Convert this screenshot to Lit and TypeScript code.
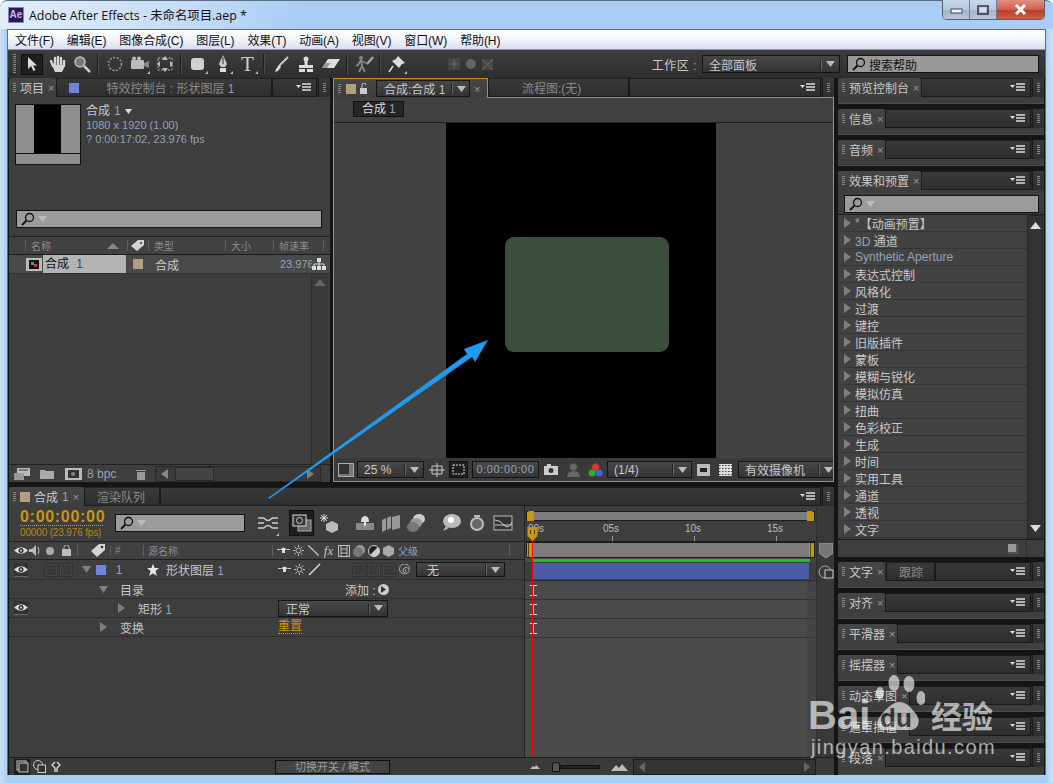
import { LitElement, html, css, svg } from "lit";
import { customElement } from "lit/decorators.js";

const ic = (w: number, h: number, body: unknown) =>
  html`<svg class="ic" width="${w}" height="${h}" viewBox="0 0 ${w} ${h}">${body}</svg>`;

const menuIc = ic(16, 9, svg`<path d="M0 2h5L2.500 5z" fill="#ddd"/><path d="M6 1h9M6 4h9M6 7h9" stroke="#ddd" stroke-width="1.300"/>`);
const triD = ic(9, 6, svg`<path d="M0 0h9L4.500 6z" fill="#bbb"/>`);
const triR = (c = "#7f7f7f") => ic(7, 10, svg`<path d="M0 0l7 5-7 5z" fill="${c}"/>`);
const triDown = ic(9, 7, svg`<path d="M0 0h9L4.500 7z" fill="#808080"/>`);
const glass = ic(14, 14, svg`<circle cx="8.500" cy="5.500" r="4" fill="none" stroke="#111" stroke-width="1.300"/><path d="M5.500 8.500L1 13" stroke="#111" stroke-width="1.800"/>`);
const eye = ic(14, 9, svg`<path d="M0 4.500Q7-2 14 4.500 7 11 0 4.500z" fill="#ddd"/><circle cx="7" cy="4.500" r="2.500" fill="#333"/><circle cx="7" cy="4.500" r="1" fill="#ddd"/>`);
const sun = ic(11, 11, svg`<circle cx="5.500" cy="5.500" r="2.500" fill="none" stroke="#bbb"/><path d="M5.500 0v2M5.500 9v2M0 5.500h2M9 5.500h2M1.500 1.500l1.500 1.500M8 8l1.500 1.500M9.500 1.500L8 3M3 8L1.500 9.500" stroke="#bbb"/>`);
const shy = ic(13, 7, svg`<path d="M0 2.500h3M10 2.500h3" stroke="#ccc"/><path d="M3 3Q6.500-2 10 3L8 3V6H5V3z" fill="#ddd"/>`);
const star = ic(12, 12, svg`<path d="M6 0l1.700 4H12L8.500 7l1.300 5L6 9.300 2.200 12l1.300-5L0 4h4.300z" fill="#e8e8e8"/>`);
const beam = ic(7, 11, svg`<path d="M0 .5h7M0 10.500h7M3.500 .5v10" stroke="#ddd"/>`);
const tag = ic(16, 15, svg`<path d="M1 8L9 1h6v6l-8 7z" fill="#d4d4d4"/><circle cx="12" cy="4" r="1.300" fill="#333"/>`);

const sel = (t: string, cls = "") => html`<div class="sel ${cls}"><span class="selt">${t}</span><b class="seld"></b>${triD}</div>`;
const grip = html`<div class="grip"><span class="dots"></span></div>`;

const menus = ["文件(F)", "编辑(E)", "图像合成(C)", "图层(L)", "效果(T)", "动画(A)", "视图(V)", "窗口(W)", "帮助(H)"];
const effects = ["【动画预置】", "3D 通道", "Synthetic Aperture", "表达式控制", "风格化", "过渡", "键控", "旧版插件", "蒙板", "模糊与锐化", "模拟仿真", "扭曲", "色彩校正", "生成", "时间", "实用工具", "通道", "透视", "文字"];

const tool = (body: unknown, more = true) => html`<div class="tool">${ic(22, 20, body)}${more ? html`<i class="more"></i>` : ""}</div>`;

@customElement("app-root")
export class AppRoot extends LitElement {
  static styles = css`
    :host { display: block; width: 1053px; height: 783px; overflow: hidden; font: 12px "Liberation Sans", "Noto Sans CJK SC", sans-serif; color: #c8c8c8; }
    * { box-sizing: border-box; }
    i { display: block; font-style: normal; }
    .ic { display: block; flex: none; }
    .win { position: relative; width: 1053px; height: 783px; overflow: hidden; border-radius: 7px 7px 0 0; background: linear-gradient(90deg, #c9dff6 0, #a9cdf4 8px, #a9cdf4 1045px, #cfe3f8 1053px); }
    .title { height: 29px; display: flex; align-items: flex-start; padding: 6px 8px 0 8px; border-top: 1px solid #5d6e80; background: linear-gradient(100deg, #e3eefa 0, #c7def6 170px, #a9cdf4 300px); border-radius: 7px 7px 0 0; }
    .aelogo { width: 16px; height: 16px; background: #2c1a55; border: 1px solid #8f83b5; color: #c8b4f4; font: bold 10px/14px "Liberation Sans", sans-serif; text-align: center; margin-right: 5px; }
    .ttext { font: 12.400px "Open Sans", "Noto Sans CJK SC", sans-serif; color: #111; line-height: 17px; }
    .wbtns { margin-left: auto; margin-top: -7px; display: flex; height: 20px; border: 1px solid #54606e; border-top: 0; border-radius: 0 0 5px 5px; overflow: hidden; }
    .wb { display: flex; align-items: center; justify-content: center; width: 27px; background: linear-gradient(#c5d8ec, #b6c9de 50%, #9fb4cb 51%, #b5c8dc); border-right: 1px solid #6e7e90; }
    .wb.close { width: 47px; border: 0; background: linear-gradient(#df8e7e, #d0604e 50%, #b93a28 51%, #c9604a); }
    .client { height: 746px; margin-left: 7px; width: 1039px; border: 1px solid #5f6d7d; border-bottom: 0; background: #151515; }
    .menu { height: 20px; display: flex; gap: 13px; align-items: center; padding-left: 7px; background: linear-gradient(#fff, #f5f7fc 40%, #d9dff0); border-bottom: 1px solid #8f99a8; color: #111; font-size: 12px; letter-spacing: -.1px; }
    .tools { height: 28px; display: flex; align-items: center; padding-left: 5px; background: linear-gradient(#3d3d3d, #2e2e2e); color: #ccc; }
    .tgrip { width: 3px; height: 20px; margin-right: 5px; background: repeating-linear-gradient(#888 0 1px, transparent 1px 2px); }
    .tool { position: relative; width: 25px; height: 20px; display: flex; align-items: center; justify-content: center; }
    .tool.on { width: 22px; margin-right: 1px; background: #1f1f1f; border: 1px solid #111; height: 21px; }
    .more { position: absolute; right: 2px; bottom: 0; border-left: 3px solid transparent; border-bottom: 3px solid #bbb; }
    .tsep { width: 1px; height: 20px; margin: 0 3px; background: #1d1d1d; border-right: 1px solid #4c4c4c; box-sizing: content-box; }
    .ttxt { font: 21px/20px "Liberation Serif", serif; color: #ccc; }
    .dim { opacity: .35; margin-left: 37px; display: flex; gap: 2px; }
    .dim .tool { width: 15px; }
    .ws { margin-left: auto; display: flex; align-items: center; }
    .wslabel { margin-right: 5px; font-size: 12px; color: #c8c8c8; letter-spacing: .5px; }
    .sel { display: flex; align-items: center; height: 16px; background: linear-gradient(#474747, #353535); border: 1px solid #141414; padding: 0 4px 0 6px; color: #c8c8c8; }
    .selt { flex: 1; white-space: nowrap; overflow: hidden; }
    .seld { width: 1px; height: 11px; background: #222; border-right: 1px solid #666; box-sizing: content-box; margin-right: 4px; }
    .sel.ws1 { width: 138px; height: 18px; margin-right: 7px; }
    .hsearch { width: 192px; height: 18px; background: #999; border: 1px solid #111; margin-right: 6px; display: flex; align-items: center; gap: 3px; padding-left: 4px; color: #111; }
    .main { height: 697px; display: flex; padding-left: 1px; gap: 4px; }
    .lc { width: 825px; flex: none; display: flex; flex-direction: column; gap: 5px; }
    .rc { width: 206px; flex: none; display: flex; flex-direction: column; gap: 5px; }
    .top { height: 404px; display: flex; gap: 3px; }
    .tabs { height: 19px; display: flex; flex: none; background: #2a2a2a; }
    .tab { display: flex; align-items: center; gap: 4px; padding: 0 2px 0 11px; background: linear-gradient(#464646, #3e3e3e); position: relative; white-space: nowrap; border-radius: 3px 3px 0 0; }
    .tab::before { content: ""; position: absolute; left: 4px; top: 5px; width: 3px; height: 9px; background: repeating-linear-gradient(#888 0 1px, transparent 1px 2px); }
    .x { color: #999; font-size: 11px; }
    .off { display: flex; align-items: center; background: linear-gradient(#393939, #2e2e2e); border: 1px solid #1a1a1a; border-top-color: #222; color: #8a8a8a; white-space: nowrap; }
    .fill { flex: 1; display: flex; align-items: center; justify-content: flex-end; padding-right: 4px; background: linear-gradient(#393939, #2e2e2e); border: 1px solid #1a1a1a; }
    .grip { width: 12px; margin-left: 1px; display: flex; align-items: center; justify-content: center; background: linear-gradient(#393939, #2e2e2e); border-left: 1px solid #1a1a1a; }
    .dots { width: 3px; height: 10px; background: repeating-linear-gradient(#888 0 1px, transparent 1px 2px); }
    .blue { color: #93a3b8; }
    .sw { width: 10px; height: 10px; background: #6f82e0; }
    .swb { width: 10px; height: 10px; background: #b19f7d; }

    .proj { width: 321px; flex: none; display: flex; flex-direction: column; background: #3e3e3e; }
    .ptab2 { width: 216px; padding-left: 12px; gap: 27px; }
    .info { display: flex; padding: 7px 0 0 6px; height: 67px; }
    .thumb { width: 66px; height: 61px; border: 1px solid #111; background: linear-gradient(#0000 0 81%, #111 81% 83%, #8e8e8e 83%), linear-gradient(90deg, #8e8e8e 0 28.500%, #000 28.500% 71%, #8e8e8e 71%); }
    .meta { margin-left: 5px; font-size: 11px; line-height: 13.500px; color: #93a3b8; }
    .meta b { font-weight: 400; font-size: 12px; color: #c8c8c8; display: flex; gap: 4px; align-items: center; height: 15px; }
    .search { height: 18px; background: #9b9b9b; border: 1px solid #111; display: flex; align-items: center; gap: 3px; padding-left: 4px; }
    .psearch { margin: 46px 8px 0 7px; }
    .thead { margin-top: 8px; height: 19px; border-top: 1px solid #222; border-bottom: 1px solid #1c1c1c; display: grid; grid-template-columns: 16px 1px 5px 76px 17px 3px 1px 20px 1px 5px 71px 1px 5px 42px 1px 5px 44px 1px; align-items: center; color: #8c8c8c; font-size: 10px; background: #414141; }
    .vs { width: 1px; height: 11px; background: #5e5e5e; }
    .trow { height: 19px; display: grid; grid-template-columns: 17px 17px 83px 23px 131px 32px 18px; align-items: center; background: #4a4a4a; border-bottom: 1px solid #303030; }
    .named { background: #b4b4b4; color: #111; height: 18px; line-height: 18px; padding-left: 2px; }
    .named em { font-style: normal; color: #345; margin-left: 4px; }
    .ty { padding-left: 6px; }
    .cut { overflow: hidden; color: #93a3b8; font-size: 11px; white-space: nowrap; }
    .pbody { flex: 1; display: flex; justify-content: flex-end; border-bottom: 1px solid #222; }
    .vscroll { width: 17px; margin-right: 2px; background: #3a3a3a; border-left: 1px solid #303030; display: flex; flex-direction: column; align-items: center; padding-top: 5px; }
    .pbar { height: 17px; display: grid; grid-template-columns: 5px 26px 25px 22px 49px 19px 1fr; align-items: center; }
    .hbar { background: #3a3a3a; height: 16px; border: 1px solid #2a2a2a; display: flex; align-items: center; padding-left: 5px; margin-right: 9px; }
    .thumbbar { width: 39px; height: 14px; margin-left: 7px; background: #444; border: 1px solid #2a2a2a; }
    .pbarend { margin-left: auto; margin-right: 6px; }

    .comp { width: 501px; flex: none; min-width: 0; display: flex; flex-direction: column; }
    .ctabs { background: #2a2a2a; }
    .ctab { width: 155px; height: 20px; z-index: 1; padding: 0 5px 0 12px; justify-content: flex-start; gap: 4px; border: 1px solid #c58f15; border-bottom: 0; border-radius: 0; }
    .ctab::before { left: 4px; }
    .csel { width: 94px; height: 17px; padding: 0 3px 0 7px; margin-left: 2px; flex: none; }
    .flow { width: 141px; padding-left: 33px; }
    .cbody { flex: 1; border: 1px solid #c58f15; display: flex; flex-direction: column; background: #414141; min-height: 0; min-width: 0; }
    .sub { height: 25px; flex: none; padding: 3px 0 0 19px; border-bottom: 1px solid #222; }
    .cbtn { display: inline-block; background: #252525; border: 1px solid #111; padding: 0 7px 0 8px; height: 16px; line-height: 14px; color: #ddd; }
    .cbtn em { font-style: normal; color: #93a3b8; margin-left: 3px; }
    .view { flex: 1; display: flex; justify-content: center; padding-right: 5px; min-height: 0; }
    .stage { width: 270px; height: 100%; background: #000; display: flex; align-items: center; justify-content: center; }
    .shape { width: 164px; height: 115px; background: #3b4d3d; border-radius: 9px; margin: 7px 0 0 12px; }
    .cbar { height: 23px; flex: none; display: grid; grid-template-columns: 4px 16px 3px 67px 5px 16px 4px 19px 4px 67px 5px 14px 9px 13px 8px 15px 4px 85px 5px 13px 9px 13px 6px minmax(0, 1fr); align-items: center; background: #3a3a3a; overflow: hidden; }
    .cbar .sel { height: 17px; }
    .timebox { height: 17px; background: linear-gradient(#474747, #353535); border: 1px solid #141414; color: #93a3b8; text-align: center; line-height: 15px; font-size: 11px; letter-spacing: .6px; }
    .box { width: 16px; height: 14px; border: 1px solid #aaa; background: #333; box-shadow: inset -5px -3px 0 -1px #777; }
    .regsel { background: #1f1f1f; border: 1px solid #111; height: 17px; display: flex; align-items: center; justify-content: center; }
    .camsel { width: 100px; font-size: 12px; }

    .tl { flex: 1; display: flex; flex-direction: column; min-height: 0; }
    .tltab1 { width: 75px; }
    .tltab2 { width: 76px; padding-left: 12px; }
    .tlbody { flex: 1; display: grid; grid-template-columns: 516px 1fr; grid-template-rows: 1fr 18px; background: #3e3e3e; min-height: 0; }
    .tll { border-right: 1px solid #222; display: flex; flex-direction: column; }
    .ctl { height: 36px; display: flex; align-items: flex-start; padding-left: 11px; border-bottom: 1px solid #222; }
    .timecode { width: 95px; padding-top: 3px; }
    .tc { color: #c8960f; font: bold 16px/16px "Liberation Sans", sans-serif; border-bottom: 1px dotted #c8960f; width: 83px; letter-spacing: .7px; white-space: nowrap; }
    .fps { color: #b5860f; font-size: 10px; line-height: 14px; white-space: nowrap; letter-spacing: -.15px; }
    .tsearch { width: 130px; margin: 8px 0 0 0; }
    .tlic { display: flex; margin: 4px 0 0 10px; align-items: center; }
    .tlic .tool { width: 26px; height: 26px; }
    .tlic .tool.on { width: 25px; background: #1f1f1f; border: 1px solid #111; margin: 0 4px 0 8px; height: 26px; }
    .gap1 { width: 8px; }
    .hd { height: 18px; display: grid; grid-template-columns: 14px 14px 16px 16px 3px 1px 11px 17px 4px 1px 4px 12px 16px 1px 4px 124px 1px 3px 15px 15px 15px 15px 15px 15px 15px 15px 2px 111px 1px; padding-left: 5px; align-items: center; justify-items: start; background: #414141; border-bottom: 1px solid #1f1f1f; font-size: 10px; color: #8d8d8d; }
    .c { justify-self: center; }
    .fx { font: italic 13px "Liberation Serif", serif; color: #c4c4c4; }
    .lay { height: 20px; display: grid; grid-template-columns: 14px 16px 15px 15px 5px 14px 3px 12px 5px 12px 20px 16px 5px 111px 15px 15px 15px 30px 15px 15px 15px 14px 5px 89px; padding-left: 5px; align-items: center; background: #3e3e3e; border-bottom: 1px solid #303030; }
    .bx { width: 14px; height: 14px; background: #3a3a3a; border: 1px solid #333; box-shadow: inset 0 0 0 1px #444; }
    .eyeb { width: 14px; height: 14px; background: #333; border-bottom: 1px solid #666; display: flex; align-items: center; }
    .lay .sel { height: 15px; padding-left: 10px; }
    .num { color: #93a3b8; }
    .row { height: 19px; display: grid; padding-left: 5px; align-items: center; border-bottom: 1px solid #2e2e2e; }
    .r1 { grid-template-columns: 14px 67px 16px 9px 225px auto; }
    .r2 { grid-template-columns: 14px 85px 16px 9px 140px 110px; }
    .r3 { grid-template-columns: 14px 67px 16px 9px 158px auto; }
    .add { display: flex; align-items: center; gap: 1px; white-space: nowrap; }
    .addb { width: 11px; height: 11px; border-radius: 50%; background: #ccc; display: flex; align-items: center; justify-content: center; margin-left: 1px; }
    .r2 .sel { height: 17px; padding-left: 7px; }
    .gold { color: #c8960f; border-bottom: 1px dotted #c8960f; width: 24px; line-height: 13px; white-space: nowrap; }
    .tlr { position: relative; display: flex; }
    .graph { flex: 1; background: linear-gradient(90deg, #4a4a4a 0 282px, #444 282px); display: flex; flex-direction: column; }
    .gtop { height: 36px; flex: none; background: #3e3e3e; padding-top: 5px; position: relative; border-bottom: 1px solid #1f1f1f; }
    .gbar { height: 10px; margin: 0 1px; background: #7c7c7c; border: 1px solid #1c1c1c; display: flex; justify-content: space-between; }
    .hd1 { width: 7px; height: 10px; margin-top: -1px; background: #c8960f; border-radius: 3px 0 0 0; }
    .hd2 { width: 7px; height: 10px; margin-top: -1px; background: #c8960f; border-radius: 0 3px 0 0; }
    .ticks { display: grid; grid-template-columns: 75px 82px 82px 1fr; padding-top: 1px; color: #b5bfca; font-size: 10px; }
    .ticks span { text-align: center; width: 22px; position: relative; line-height: 13px; }
    .ticks span::after { content: ""; position: absolute; left: 12px; top: 14px; width: 1px; height: 5px; background: #999; }
    .ticks span.z::after { display: none; }
    .wa { height: 16px; flex: none; background: #7c7c7c; border: 1px solid #1c1c1c; margin: 0 1px; display: flex; justify-content: space-between; }
    .wah { width: 5px; background: repeating-linear-gradient(90deg, #c8960f 0 1px, #5d4707 1px 2px, #c8960f 2px 5px); }
    .gr { height: 3px; flex: none; background: #1fbd2a; margin: 1px 6px 0 7px; }
    .bl { height: 19px; flex: none; background: #3e3e3e; border-bottom: 1px solid #2e2e2e; padding: 1px 7px 1px 7px; }
    .bl div { height: 16px; background: #4b5ca6; }
    .grow { height: 19px; flex: none; border-bottom: 1px solid #343434; display: flex; align-items: center; padding-left: 5px; }
    .strip { width: 18px; background: #393939; border-left: 1px solid #2e2e2e; display: flex; flex-direction: column; align-items: center; padding-top: 37px; gap: 7px; }
    .tlbl { display: grid; grid-template-columns: 5px 16px 3px 13px 5px 12px 212px 115px; align-items: center; border-top: 1px solid #1c1c1c; background: #3a3a3a; }
    .sbtn { height: 14px; background: #444; border: 1px solid #111; text-align: center; color: #999; font-size: 11px; line-height: 12px; white-space: nowrap; overflow: hidden; }
    .onb { width: 16px; height: 16px; background: #1f1f1f; display: flex; align-items: center; justify-content: center; }
    .tlbr { display: grid; grid-template-columns: 5px 12px 10px 50px 9px 18px 4px 1fr; align-items: center; border-top: 1px solid #1c1c1c; background: #3a3a3a; }
    .zoomsl { display: flex; align-items: center; }
    .track { height: 4px; width: 40px; background: #222; border: 1px solid #111; }
    .knob { width: 8px; height: 10px; background: #555; border: 1px solid #111; border-radius: 3px 3px 0 0; }
    .hs2 { height: 16px; background: #333; border: 1px solid #1c1c1c; display: flex; justify-content: space-between; align-items: center; padding: 0 5px; margin-right: 18px; }

    .rp { height: 26px; flex: none; display: flex; flex-direction: column; background: #3e3e3e; border-bottom: 1px solid #4c4c4c; }
    .rp.last { height: 27px; }
    .trk { width: 49px; justify-content: center; margin-left: 1px; }
    .fx-p { flex: none; height: 386px; display: flex; flex-direction: column; background: #3e3e3e; }
    .fsearch { margin: 5px 5px 1px 6px; }
    .fl { flex: 1; display: flex; border-top: 1px solid #1c1c1c; min-height: 0; }
    .items { width: 189px; }
    .it { height: 17px; display: flex; align-items: center; gap: 4px; padding-left: 6px; border-bottom: 1px solid #363636; white-space: nowrap; background: #424242; }
    .star { color: #93a3b8; margin-right: -4px; }
    .latin { color: #93a3b8; }
    .vs2 { flex: 1; background: #333; border: 1px solid #272727; margin-right: 1px; display: flex; flex-direction: column; align-items: center; justify-content: space-between; padding: 6px 0; }
    .ffoot { height: 18px; flex: none; border-top: 1px solid #1c1c1c; display: flex; justify-content: flex-end; align-items: center; }
    .nw { width: 10px; height: 10px; background: #999; box-shadow: inset -2px -2px 0 #555; margin-right: 8px; }
    .fend { width: 18px; height: 100%; border-left: 1px solid #303030; }

    .arrow { position: absolute; left: 0; top: 0; pointer-events: none; }
    .wm { position: absolute; left: 790px; top: 660px; width: 263px; height: 120px; pointer-events: none; color: #fff; opacity: .62; }
    .wm span { position: absolute; white-space: nowrap; font-family: "Liberation Sans", sans-serif; }
    .wm .bai { left: 18px; top: 34px; font: bold 40px/43px "Liberation Sans", sans-serif; }
    .wm .du { left: 90px; top: 43px; font: bold 26px/30px "Liberation Sans", sans-serif; color: #3a3a3a; }
    .wm .jy { left: 141px; top: 37px; font: bold 31px/36px "Noto Sans CJK SC", sans-serif; }
    .wm .url { left: 21px; top: 75px; font-size: 20px; line-height: 24px; letter-spacing: 1.400px; }
    .wm svg { position: absolute; left: 85px; top: 8px; }
  `;

  private rp(name: string, last = false, extra: unknown = "") {
    return html`<div class="rp ${last ? "last" : ""}"><div class="tabs"><div class="tab">${name}<span class="x">×</span></div>${extra}<div class="fill">${menuIc}</div>${grip}</div></div>`;
  }

  render() {
    return html`<div class="win">
      <div class="title">
        <div class="aelogo">Ae</div>
        <div class="ttext">Adobe After Effects - 未命名项目.aep *</div>
        <div class="wbtns">
          <div class="wb">${ic(13, 8, svg`<rect x="1" y="3" width="11" height="4" fill="#eef" stroke="#445"/>`)}</div>
          <div class="wb">${ic(12, 10, svg`<rect x="1" y="1" width="10" height="8" fill="none" stroke="#334" stroke-width="1.500"/><rect x="3" y="3" width="6" height="4" fill="#dde"/>`)}</div>
          <div class="wb close">${ic(13, 11, svg`<path d="M2 1l9 9M11 1L2 10" stroke="#fff" stroke-width="3"/>`)}</div>
        </div>
      </div>
      <div class="client">
        <div class="menu">${menus.map((m) => html`<span>${m}</span>`)}</div>
        <div class="tools">
          <div class="tgrip"></div>
          <div class="tool on">${ic(12, 16, svg`<path d="M2 1v12l3-3 2.500 5 2-1-2.500-4.500h4z" fill="#ddd"/>`)}</div>
          ${tool(svg`<path d="M7 12L5 7M9 11V4M12 11V3M15 11V4M18 12V7" stroke="#d5d5d5" stroke-width="2.400" stroke-linecap="round"/><path d="M6 11h12v3l-2 4H9z" fill="#d5d5d5"/>`, false)}
          ${tool(svg`<circle cx="9" cy="8" r="5" fill="#777" stroke="#bbb" stroke-width="1.500"/><path d="M13 12l6 6" stroke="#ccc" stroke-width="2.500"/>`, false)}
          <div class="tsep"></div>
          ${tool(svg`<circle cx="11" cy="10" r="6.500" fill="none" stroke="#999" stroke-width="1.500" stroke-dasharray="2 1.500"/>`, false)}
          ${tool(svg`<rect x="2" y="6" width="13" height="9" rx="1" fill="#bbb"/><circle cx="5" cy="4.500" r="2" fill="#bbb"/><circle cx="10" cy="4.500" r="2" fill="#bbb"/><path d="M15 9l5-2v7l-5-2z" fill="#888"/>`)}
          ${tool(svg`<rect x="4" y="4" width="14" height="12" fill="none" stroke="#bbb" stroke-dasharray="2 1.500"/><path d="M11 2l3 4H8zM11 18l3-4H8zM3 10l3-3v6zM19 10l-3-3v6z" fill="#bbb"/>`, false)}
          <div class="tsep"></div>
          ${tool(svg`<rect x="4" y="4" width="13" height="12" rx="3" fill="#d0d0d0"/>`)}
          ${tool(svg`<path d="M11 1l4 9-2 3H9l-2-3z" fill="#ccc"/><path d="M11 3v7" stroke="#333"/><rect x="8" y="14" width="6" height="4" fill="#ddd"/>`)}
          <div class="tool"><span class="ttxt">T</span><i class="more"></i></div>
          <div class="tsep"></div>
          ${tool(svg`<path d="M18 3L9 12" stroke="#ccc" stroke-width="2"/><path d="M9 11l2 2-3 4-3 1 1-3z" fill="#ddd"/>`, false)}
          ${tool(svg`<circle cx="11" cy="5" r="2.500" fill="#ddd"/><path d="M9.500 7h3v4h-3z" fill="#ddd"/><rect x="4" y="11" width="14" height="3" fill="#ddd"/><rect x="4" y="15" width="6" height="3" fill="#ddd"/><rect x="12" y="15" width="6" height="3" fill="#ddd"/>`, false)}
          ${tool(svg`<path d="M8 5h12l-6 9H2z" fill="#ddd"/><path d="M2 14l3.500-5h5L7 14z" fill="#999"/>`, false)}
          <div class="tsep"></div>
          ${tool(svg`<circle cx="8" cy="4" r="2" fill="#888"/><path d="M8 6L5 11l-2 1M8 6l1 6-3 6M9 12l3 6M8 7l5 2" stroke="#888" stroke-width="1.800" fill="none"/><path d="M20 3l-6 7" stroke="#aaa" stroke-width="2"/>`, false)}
          <div class="tsep"></div>
          ${tool(svg`<path d="M12 2l7 7-3 1-3 4-7-7 4-2z" fill="#ddd"/><path d="M7 12l-4 6" stroke="#ddd" stroke-width="1.500"/>`)}
          <div class="dim">
            <div class="tool">${ic(14, 14, svg`<rect x="1" y="1" width="12" height="12" fill="#666"/><path d="M7 3v8M3 7h8" stroke="#ccc"/>`)}</div>
            <div class="tool">${ic(12, 12, svg`<circle cx="6" cy="6" r="5" fill="#bbb"/>`)}</div>
            <div class="tool">${ic(13, 13, svg`<rect x="1" y="1" width="11" height="11" fill="#666"/><path d="M1 1l11 11M12 1L1 12" stroke="#ccc"/>`)}</div>
          </div>
          <div class="ws">
            <span class="wslabel">工作区<span class="blue"> :</span></span>
            ${sel("全部面板", "ws1")}
            <div class="hsearch">${glass}<span>搜索帮助</span></div>
          </div>
        </div>
        <div class="main">
          <div class="lc">
            <div class="top">
              <div class="proj">
                <div class="tabs">
                  <div class="tab">项目<span class="x">×</span></div>
                  <div class="off ptab2"><span class="sw"></span><span>特效控制台 : 形状图层 <span class="blue">1</span></span></div>
                  <div class="fill">${menuIc}</div>${grip}
                </div>
                <div class="info">
                  <div class="thumb"></div>
                  <div class="meta"><b>合成 <span class="blue">1</span> ${ic(7, 5, svg`<path d="M0 0h7L3.500 5z" fill="#ddd"/>`)}</b>1080 x 1920 (1.00)<br />? 0:00:17:02, 23.976 fps</div>
                </div>
                <div class="search psearch">${glass}${triD}</div>
                <div class="thead">
                  <i></i><span class="vs"></span><i></i><span>名称</span>
                  ${ic(12, 6, svg`<path d="M0 6h12L6 0z" fill="#888"/>`)}
                  <i></i><span class="vs"></span>
                  <span class="c">${ic(16, 13, svg`<path d="M1 7L8 1h6v5l-7 6z" fill="#d4d4d4"/><circle cx="11" cy="4" r="1" fill="#333"/>`)}</span>
                  <span class="vs"></span><i></i><span>类型</span><span class="vs"></span><i></i><span>大小</span><span class="vs"></span><i></i><span>帧速率</span><span class="vs"></span>
                </div>
                <div class="trow">
                  <i></i>
                  ${ic(16, 13, svg`<rect width="16" height="13" fill="#bbb"/><rect x="3" y="2" width="10" height="9" fill="#111"/><rect x="5" y="4" width="3" height="3" fill="#2a9"/><rect x="8" y="6" width="3" height="3" fill="#c33"/>`)}
                  <div class="named">合成 <em>1</em></div>
                  <span class="swb c"></span>
                  <span class="ty">合成</span>
                  <span class="cut">23.976</span>
                  ${ic(14, 12, svg`<path d="M5 0h4v4H5zM0 8h4v4H0zM5 8h4v4H5zM10 8h4v4h-4z" fill="#ddd"/><path d="M7 4v2M2 8V6h10v2M7 6v2" stroke="#ddd" fill="none"/>`)}
                </div>
                <div class="pbody"><div class="vscroll">${ic(12, 7, svg`<path d="M0 7h12L6 0z" fill="#666"/>`)}</div></div>
                <div class="pbar">
                  <i></i>
                  ${ic(16, 12, svg`<rect x="3" y="0" width="13" height="8" fill="#bbb"/><rect x="0" y="5" width="10" height="7" fill="#999"/><path d="M5 2h9" stroke="#333"/>`)}
                  ${ic(14, 11, svg`<path d="M0 2h5l1 1h8v8H0z" fill="#aaa"/>`)}
                  ${ic(17, 12, svg`<rect width="17" height="12" fill="#bbb"/><rect x="3" y="2" width="11" height="8" fill="#333"/><circle cx="8" cy="6" r="2" fill="#888"/>`)}
                  <span class="blue">8 bpc</span>
                  ${ic(10, 12, svg`<path d="M0 2h10v1H0zM1 4h8v8H1z" fill="#999"/>`)}
                  <div class="hbar">
                    ${ic(7, 10, svg`<path d="M7 0L0 5l7 5z" fill="#888"/>`)}
                    <div class="thumbbar"></div>
                    <span class="pbarend">${triR()}</span>
                  </div>
                </div>
              </div>
              <div class="comp">
                <div class="tabs ctabs">
                  <div class="tab ctab">
                    <span class="swb"></span>
                    ${ic(10, 11, svg`<rect x="0" y="5" width="7" height="6" fill="#ccc"/><path d="M2 5V2a2 2 0 0 1 4 0" stroke="#ccc" fill="none"/>`)}
                    ${sel("合成:合成 1", "csel")}<span class="x">×</span>
                  </div>
                  <div class="off flow">流程图:(无)</div>
                  <div class="fill">${menuIc}</div>${grip}
                </div>
                <div class="cbody">
                  <div class="sub"><span class="cbtn">合成<em>1</em></span></div>
                  <div class="view"><div class="stage"><div class="shape"></div></div></div>
                  <div class="cbar">
                    <i></i>
                    <div class="box"></div><i></i>
                    ${sel("25 %")}<i></i>
                    ${ic(16, 14, svg`<path d="M3 3h10v8H3zM8 0v14M0 7h16" fill="none" stroke="#ccc"/>`)}<i></i>
                    <div class="regsel">${ic(13, 11, svg`<rect x="1" y="1" width="11" height="9" fill="none" stroke="#ddd" stroke-dasharray="2 1"/>`)}</div><i></i>
                    <div class="timebox">0:00:00:00</div><i></i>
                    ${ic(14, 11, svg`<rect y="2" width="14" height="9" fill="#ccc"/><rect x="3" y="0" width="4" height="2" fill="#ccc"/><circle cx="7" cy="6.500" r="2.500" fill="#333"/>`)}<i></i>
                    ${ic(13, 14, svg`<circle cx="6.500" cy="4" r="3.500" fill="#666"/><path d="M0 14q0-6 6.500-6T13 14z" fill="#666"/>`)}<i></i>
                    ${ic(15, 14, svg`<circle cx="7.500" cy="4" r="3.500" fill="#d33"/><circle cx="4" cy="10" r="3.500" fill="#3a3"/><circle cx="11" cy="10" r="3.500" fill="#46c"/>`)}<i></i>
                    ${sel("(1/4)")}<i></i>
                    ${ic(13, 12, svg`<rect width="13" height="12" fill="#bbb"/><rect x="3" y="4" width="7" height="4" fill="#222"/>`)}<i></i>
                    ${ic(13, 12, svg`<rect width="13" height="12" fill="#ddd"/><path d="M0 1.500h13M0 4.500h13M0 7.500h13M0 10.500h13" stroke="#444" stroke-dasharray="1.500 1.500"/>`)}<i></i>
                    ${sel("有效摄像机", "camsel")}
                  </div>
                </div>
              </div>
            </div>
            <div class="tl">
              <div class="tabs">
                <div class="tab tltab1"><span class="swb"></span>合成 <span class="blue">1</span><span class="x">×</span></div>
                <div class="off tltab2">渲染队列</div>
                <div class="fill">${menuIc}</div>${grip}
              </div>
              <div class="tlbody">
                <div class="tll">
                  <div class="ctl">
                    <div class="timecode"><div class="tc">0:00:00:00</div><div class="fps">00000 (23.976 fps)</div></div>
                    <div class="search tsearch">${glass}${triD}</div>
                    <div class="tlic">
                      ${tool(svg`<path d="M1 5h6M1 10h6M1 15h6M7 5q4 5 8 0M7 15q4-5 8 0M15 5h6M15 10h6M15 15h6" stroke="#ccc" stroke-width="1.500" fill="none"/>`)}
                      <div class="tool on">${ic(20, 18, svg`<rect x="6" y="6" width="13" height="11" fill="#666" stroke="#aaa"/><rect x="1" y="1" width="13" height="11" fill="#333" stroke="#ddd"/><circle cx="7.500" cy="6.500" r="3" fill="none" stroke="#ccc"/>`)}</div>
                      ${tool(svg`<path d="M12 8l6 3v6l-6 3-6-3v-6z" fill="#bbb"/><path d="M4 1v8M0 5h8M1 2l6 6M7 2L1 8" stroke="#ddd"/>`, false)}
                      <div class="gap1"></div>
                      ${tool(svg`<rect x="2" y="10" width="18" height="7" fill="#888"/><path d="M7 9q0-6 4-6t4 6l-3 0v4h-2V9z" fill="#ddd"/>`, false)}
                      ${tool(svg`<path d="M2 7l4-2v12l-4 2zM7 5l4-2v12l-4 2zM12 4l8-2v13l-8 2z" fill="#999"/>`, false)}
                      ${tool(svg`<ellipse cx="13" cy="6" rx="6" ry="5" fill="#ccc"/><ellipse cx="10" cy="10" rx="6" ry="5" fill="#999"/><ellipse cx="7" cy="14" rx="6" ry="5" fill="#777"/>`, false)}
                      <div class="gap1"></div>
                      ${tool(svg`<ellipse cx="12" cy="8" rx="9" ry="7" fill="#bbb"/><circle cx="11" cy="7" r="3" fill="#fff"/><path d="M6 13l-3 5 6-3z" fill="#bbb"/>`, false)}
                      ${tool(svg`<circle cx="11" cy="11" r="6" fill="#666" stroke="#bbb" stroke-width="2"/><path d="M8 3h6M11 3v2" stroke="#bbb" stroke-width="2"/>`, false)}
                      ${tool(svg`<rect x="2" y="3" width="18" height="14" fill="#333" stroke="#bbb"/><path d="M3 7q5 0 9 5t8-3M3 12h17" stroke="#ccc" fill="none"/>`, false)}
                    </div>
                  </div>
                  <div class="hd">
                    <span class="c">${eye}</span>
                    <span class="c">${ic(12, 11, svg`<path d="M0 4h3l4-4v11L3 7H0z" fill="#bbb"/><path d="M9 2q2 3.500 0 7" stroke="#bbb" fill="none"/>`)}</span>
                    <span class="c">${ic(8, 8, svg`<circle cx="4" cy="4" r="4" fill="#aaa"/>`)}</span>
                    <span class="c">${ic(9, 11, svg`<rect y="4" width="9" height="7" fill="#bbb"/><path d="M2 4V2.500a2.500 2.500 0 0 1 5 0V4" fill="none" stroke="#bbb"/>`)}</span>
                    <i></i><span class="vs"></span><i></i>
                    <span class="c">${tag}</span>
                    <i></i><span class="vs"></span><i></i>
                    <span>#</span><i></i><span class="vs"></span><i></i>
                    <span>源名称</span>
                    <span class="vs"></span><i></i>
                    <span class="c">${shy}</span>
                    <span class="c">${sun}</span>
                    <span class="c">${ic(11, 11, svg`<path d="M0 0l11 11" stroke="#bbb" stroke-width="1.300"/>`)}</span>
                    <span class="c fx">fx</span>
                    <span class="c">${ic(12, 12, svg`<rect x=".5" y=".5" width="11" height="11" fill="none" stroke="#bbb"/><path d="M3 .5v11M9 .5v11M3 4h6M3 8h6" stroke="#bbb"/>`)}</span>
                    <span class="c">${ic(12, 12, svg`<circle cx="7" cy="5" r="5" fill="#999"/><circle cx="5" cy="7" r="5" fill="#777"/>`)}</span>
                    <span class="c">${ic(12, 12, svg`<circle cx="6" cy="6" r="5.500" fill="#222" stroke="#ccc"/><path d="M6 .5a5.500 5.500 0 0 1 0 11z" fill="#ccc" transform="rotate(45 6 6)"/>`)}</span>
                    <span class="c">${ic(11, 12, svg`<path d="M5.500 0l5.500 3v6l-5.500 3L0 9V3z" fill="#aaa"/>`)}</span>
                    <i></i>
                    <span class="blue">父级</span>
                    <span class="vs"></span>
                  </div>
                  <div class="lay">
                    <span class="eyeb">${eye}</span><i></i>
                    <span class="bx"></span><span class="bx"></span><i></i>
                    <span class="c">${triDown}</span><i></i>
                    <span class="sw"></span><i></i>
                    <span class="num c">1</span><i></i>
                    <span class="c">${star}</span><i></i>
                    <span>形状图层 <span class="num">1</span></span>
                    <span class="c">${shy}</span><span class="c">${sun}</span>
                    <span class="c">${ic(13, 13, svg`<path d="M1 12L12 1" stroke="#ddd" stroke-width="1.500"/>`)}</span><i></i>
                    <span class="bx"></span><span class="bx"></span><span class="bx"></span>
                    <span class="c">${ic(11, 11, svg`<path d="M5.500 5.500a1.500 1.500 0 1 1-1.500 1.500M4 7a3 3 0 1 1 4.500 2M8.500 9A5 5 0 1 1 10.500 5" fill="none" stroke="#aaa"/>`)}</span><i></i>
                    ${sel("无")}
                  </div>
                  <div class="row r1"><i></i><i></i><span class="c">${triDown}</span><i></i><span>目录</span><span class="add">添加 :<span class="addb">${ic(5, 7, svg`<path d="M0 0l5 3.500L0 7z" fill="#333"/>`)}</span></span></div>
                  <div class="row r2"><span class="eyeb">${eye}</span><i></i><span class="c">${triR()}</span><i></i><span>矩形 <span class="num">1</span></span>${sel("正常")}</div>
                  <div class="row r3"><i></i><i></i><span class="c">${triR()}</span><i></i><span>变换</span><span class="gold">重置</span></div>
                </div>
                <div class="tlr">
                  <div class="graph">
                    <div class="gtop">
                      <div class="gbar"><span class="hd1"></span><span class="hd2"></span></div>
                      <div class="ticks"><span class="z">00s</span><span>05s</span><span>10s</span><span>15s</span></div>
                    </div>
                    <div class="wa"><span class="wah"></span><span class="wah"></span></div>
                    <div class="gr"></div>
                    <div class="bl"><div></div></div>
                    <div class="grow">${beam}</div>
                    <div class="grow">${beam}</div>
                    <div class="grow">${beam}</div>
                  </div>
                  <div class="strip">
                    ${ic(14, 15, svg`<path d="M0 0h14v10l-7 5-7-5z" fill="#777" stroke="#999"/>`)}
                    ${ic(16, 14, svg`<circle cx="7" cy="7" r="6" fill="none" stroke="#aaa"/><rect x="7" y="5" width="8" height="8" fill="#333" stroke="#ccc"/>`)}
                  </div>
                  <svg class="arrow" width="20" height="250">
                    <path d="M2.500 21h10v9l-5 5-5-5z" fill="#c8960f"/>
                    <path d="M5.500 24v4M9.500 24v4" stroke="#4a3805"/>
                    <path d="M7.500 35V250" stroke="#f00" stroke-width="1"/>
                  </svg>
                </div>
                <div class="tlbl">
                  <i></i>
                  <div class="onb">${ic(13, 13, svg`<rect x="1" y="1" width="9" height="9" fill="none" stroke="#ccc"/><rect x="3" y="3" width="9" height="9" fill="#333" stroke="#ccc"/>`)}</div>
                  <i></i>
                  ${ic(13, 13, svg`<circle cx="5" cy="5" r="4.500" fill="none" stroke="#ccc"/><rect x="5" y="5" width="7.500" height="7.500" fill="#333" stroke="#ccc"/>`)}
                  <i></i>
                  ${ic(10, 12, svg`<path d="M4 1L1 4l3 3v4M6 1l3 3-3 3v4" fill="none" stroke="#ccc" stroke-width="1.500"/>`)}
                  <i></i>
                  <div class="sbtn">切换开关 / 模式</div>
                </div>
                <div class="tlbr">
                  <i></i>
                  ${ic(10, 5, svg`<path d="M0 5l3-3 2 1 1-2 4 4z" fill="#bbb"/>`)}
                  <i></i>
                  <div class="zoomsl"><span class="knob"></span><span class="track"></span></div>
                  <i></i>
                  ${ic(17, 8, svg`<path d="M0 8l5-6 3 3 3-4 6 7z" fill="#bbb"/>`)}
                  <i></i>
                  <div class="hs2">${ic(6, 10, svg`<path d="M6 0L0 5l6 5z" fill="#666"/>`)}${ic(6, 10, svg`<path d="M0 0l6 5-6 5z" fill="#666"/>`)}</div>
                </div>
              </div>
            </div>
          </div>
          <div class="rc">
            ${this.rp("预览控制台")}
            ${this.rp("信息")}
            ${this.rp("音频")}
            <div class="fx-p">
              <div class="tabs"><div class="tab">效果和预置<span class="x">×</span></div><div class="fill">${menuIc}</div>${grip}</div>
              <div class="search fsearch">${glass}${triD}</div>
              <div class="fl">
                <div class="items">
                  ${effects.map((e, i) => html`<div class="it">${triR()}${i === 0 ? html`<span class="star">*</span>` : ""}${e === "3D 通道" ? html`<span><span class="latin">3D</span> 通道</span>` : html`<span class="${e.startsWith("Syn") ? "latin" : ""}">${e}</span>`}</div>`)}
                </div>
                <div class="vs2">${ic(11, 7, svg`<path d="M0 7h11L5.500 0z" fill="#ddd"/>`)}${ic(11, 7, svg`<path d="M0 0h11L5.500 7z" fill="#ddd"/>`)}</div>
              </div>
              <div class="ffoot"><span class="nw"></span><span class="fend"></span></div>
            </div>
            ${this.rp("文字", false, html`<div class="off trk">跟踪</div>`)}
            ${this.rp("对齐")}
            ${this.rp("平滑器")}
            ${this.rp("摇摆器")}
            ${this.rp("动态草图")}
            ${this.rp("遮罩插值")}
            ${this.rp("段落", true)}
          </div>
        </div>
      </div>
      <svg class="arrow" width="1053" height="783">
        <path d="M268 498L467 354l-3-5 24-9-13 22-3-5L269 499z" fill="#1f9af0"/>
      </svg>
      <div class="wm">
        <span class="bai">Bai</span>
        <svg width="50" height="66" viewBox="0 0 50 66">
          <ellipse cx="5" cy="25" rx="4" ry="6" fill="#fff"/>
          <ellipse cx="19" cy="15" rx="5.500" ry="8" fill="#fff"/>
          <ellipse cx="34" cy="16" rx="5.500" ry="8" fill="#fff"/>
          <ellipse cx="46" cy="30" rx="4.500" ry="7" fill="#fff"/>
          <path d="M24 34c8 0 12 6 17 12s3 16-6 16H10c-9 0-9-8-6-12s12-16 20-16z" fill="#fff"/>
        </svg>
        <span class="du">du</span>
        <span class="jy">经验</span>
        <span class="url">jingyan.baidu.com</span>
      </div>
    </div>`;
  }
}
